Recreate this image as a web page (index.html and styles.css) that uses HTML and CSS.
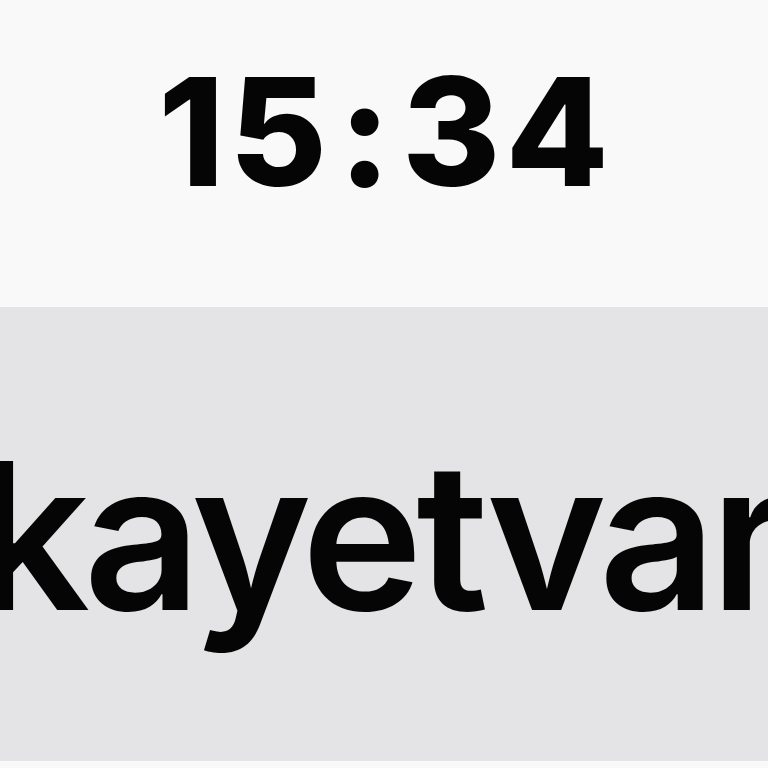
FILE: index.html
```html
<!DOCTYPE html>
<html lang="tr">
<head>
<meta charset="utf-8">
<title>15:34</title>
<link rel="stylesheet" href="styles.css">
</head>
<body>
  <div class="status">
    <div class="time">15<span class="colon">:</span>34</div>
  </div>
  <div class="bar">
    <div class="url">şikayetvar.com</div>
  </div>
  <div class="foot"></div>
</body>
</html>
```
FILE: styles.css
```css
html, body {
  margin: 0;
  padding: 0;
  background: #f9f9f9;
  overflow: hidden;
}
.status {
  height: 307px;
  box-sizing: border-box;
  padding-top: 57px;
  text-align: center;
  padding-left: 4px;
}
.time {
  font-family: Inter, "Liberation Sans", sans-serif;
  font-weight: 800;
  font-size: 150px;
  line-height: 1;
  color: #050505;
  letter-spacing: 5px;
}
.colon {
  margin: 0 6px;
}
.bar {
  height: 454px;
  box-sizing: border-box;
  background: #e4e4e6;
  overflow: hidden;
  padding-top: 126px;
}
.url {
  font-family: Inter, "Liberation Sans", sans-serif;
  font-weight: 560;
  font-size: 205px;
  line-height: 1;
  color: #050505;
  white-space: nowrap;
  letter-spacing: -6.5px;
  margin-left: -180px;
}
.foot {
  height: 7px;
  background: #f9f9f9;
}
```
